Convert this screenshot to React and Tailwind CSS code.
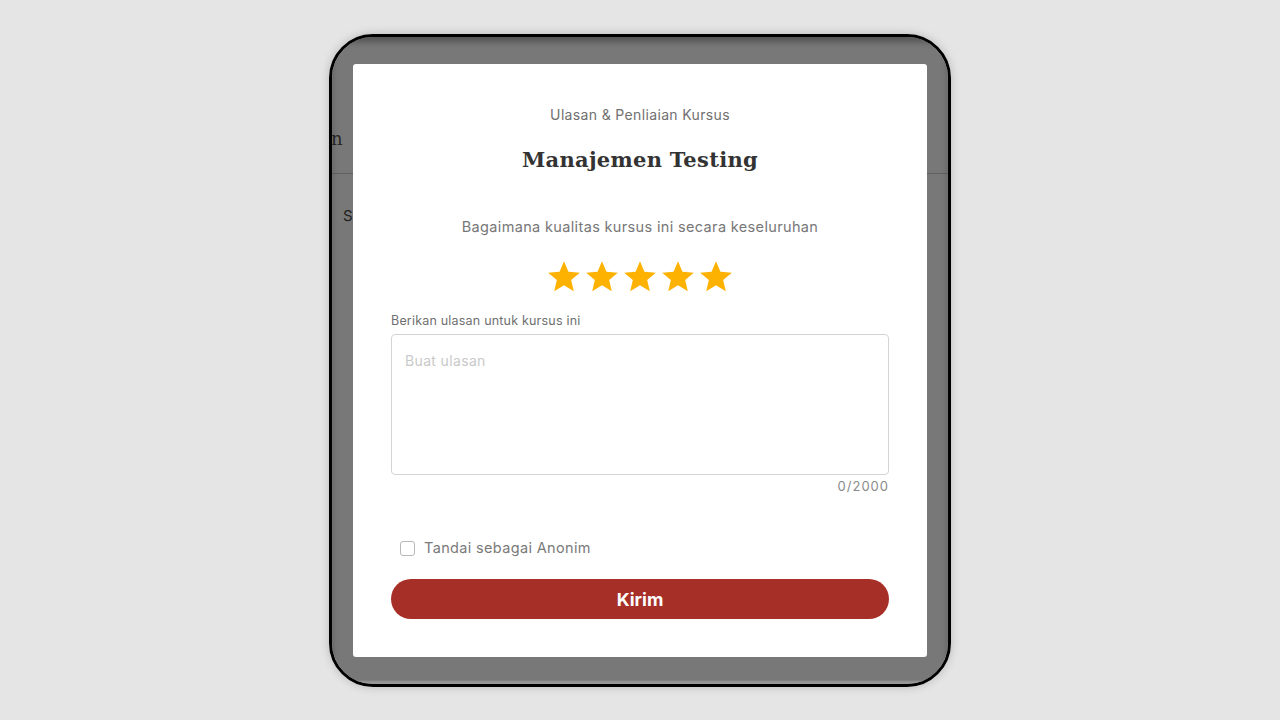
import React, { useState } from 'react';

const StarIcon = () => (
  <svg viewBox="0 0 24 24" className="w-[38px] h-[38px]" fill="#fdb100">
    <path d="M12 17.27L18.18 21l-1.64-7.03L22 9.24l-7.19-.61L12 2 9.19 8.63 2 9.24l5.46 4.73L5.82 21z" />
  </svg>
);

const App = () => {
  const [review, setReview] = useState('');
  const [anon, setAnon] = useState(false);

  return (
    <div className="w-full h-[720px] bg-[#e5e5e5] flex justify-center pt-[34px] font-['Inter',sans-serif]">
      <div className="relative w-[622px] h-[653px] rounded-[44px] border-[3px] border-black bg-white overflow-hidden shadow-[0_0_10px_rgba(0,0,0,0.2)]">
        {/* page behind the dialog */}
        <div className="flex flex-col">
          <div className="h-[137px] border-b border-[#cfcfcf] flex items-end pb-[21px]">
            <span className="font-['DejaVu_Serif',serif] text-[18px] text-[#555] -ml-[1px]">n</span>
          </div>
          <div className="pl-[11px] pt-[31px] text-[15px] text-[#444]">S</div>
        </div>

        <div className="absolute inset-0 bg-black/[0.53] shadow-[inset_0_5px_6px_rgba(0,0,0,0.3),inset_0_-3px_2px_rgba(255,255,255,0.25)] flex justify-center pt-[27px]">
          <div className="w-[574px] h-[593px] bg-white rounded-[3px] flex flex-col px-[38px] pt-[41px] tracking-[0.35px]">
            <p className="text-center text-[14px] leading-[20px] text-[#707070]">Ulasan &amp; Penliaian Kursus</p>
            <h2 className="mt-[21px] text-center font-['DejaVu_Serif',serif] font-bold text-[21px] leading-[28px] text-[#333] tracking-[0.3px]">
              Manajemen Testing
            </h2>
            <p className="mt-[43px] text-center text-[14.5px] leading-[20px] text-[#777]">
              Bagaimana kualitas kursus ini secara keseluruhan
            </p>
            <div className="mt-[23px] flex justify-center h-[34px] items-center">
              {[0, 1, 2, 3, 4].map((i) => (
                <StarIcon key={i} />
              ))}
            </div>
            <label className="mt-[19px] text-[12.5px] leading-[16px] text-[#6f6f6f] tracking-[0.2px]">Berikan ulasan untuk kursus ini</label>
            <textarea
              value={review}
              onChange={(e) => setReview(e.target.value)}
              placeholder="Buat ulasan"
              className="mt-[5px] h-[141px] w-full resize-none rounded-[4px] border border-[#d4d4d4] px-[13px] py-[16px] text-[14px] leading-[20px] text-[#333] placeholder:text-[#c9c9c9] outline-none"
            />
            <p className="mt-[2px] text-right text-[13px] leading-[18px] text-[#8a8a8a] tracking-[1px]">{review.length}/2000</p>
            <label className="mt-[43px] ml-[9px] flex items-center gap-[9px] h-[20px] text-[14.5px] text-[#7a7a7a]">
              <input
                type="checkbox"
                checked={anon}
                onChange={() => setAnon(!anon)}
                className="appearance-none w-[15px] h-[15px] rounded-[3px] border border-[#b8b8b8] bg-white"
              />
              Tandai sebagai Anonim
            </label>
            <button className="mt-[21px] h-[40px] w-full rounded-full bg-[#a63027] text-white font-bold text-[18px] tracking-normal">
              Kirim
            </button>
          </div>
        </div>
      </div>
    </div>
  );
};

export default App;
